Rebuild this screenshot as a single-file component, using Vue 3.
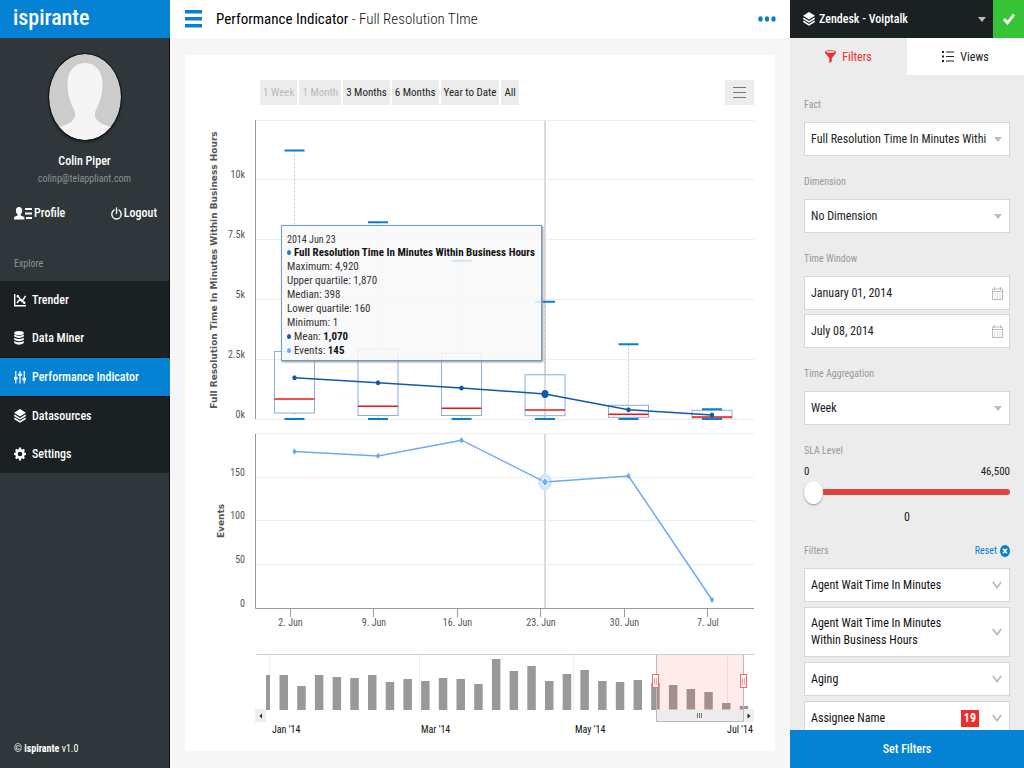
<template>
  <div class="app">
    <aside class="sidebar">
      <h1 class="logo">ispirante</h1>

      <div class="profile">
        <svg class="avatar" viewBox="0 0 72 86">
          <clipPath id="avatar-clip"><ellipse cx="36" cy="43" rx="36" ry="43" /></clipPath>
          <g clip-path="url(#avatar-clip)">
            <rect width="72" height="86" fill="#cccccc" />
            <path fill="#f5f5f5" d="M36 9C25 9 18.500 18 18.500 29.500C18.500 42 22 50 25.500 57C28.500 66 20 70 11 73V86H62V73C52 70 43.500 66 46.500 57C50 50 53.500 42 53.500 29.500C53.500 18 47 9 36 9Z" />
          </g>
        </svg>
        <strong class="user-name">Colin Piper</strong>
        <span class="user-email">colinp@telappliant.com</span>
      </div>

      <div class="user-links">
        <a href="#profile">
          <svg width="18" height="13" viewBox="0 0 18 13" fill="#fff">
            <path d="M5 0C7 0 8.200 1.400 8.200 3.500C8.200 5.200 7.500 6.500 6.700 7.200V8.400L9.700 9.800C10.200 10.100 10.400 10.500 10.400 11V12.500H0V11C0 10.500 .2 10.100 .7 9.800L3.500 8.400V7.200C2.600 6.500 1.900 5.200 1.900 3.500C1.900 1.400 3 0 5 0Z" />
            <path d="M11 1H18V3H11ZM11 5.500H18V7.500H11ZM12 10H18V12H12Z" />
          </svg>
          Profile
        </a>
        <a href="#logout">
          <svg width="11" height="13" viewBox="0 0 11 13" fill="none" stroke="#fff" stroke-width="1.400" stroke-linecap="round">
            <path d="M3 3C1.500 4 .8 5.400 .8 7C.8 9.900 2.900 12 5.500 12S10.200 9.900 10.200 7C10.200 5.400 9.500 4 8 3M5.500 1V6.500" />
          </svg>
          Logout
        </a>
      </div>

      <h2 class="nav-title">Explore</h2>
      <nav class="nav">
        <a v-for="item in navItems" :key="item.label" :href="'#' + item.icon" :class="{ active: item.active }">
          <svg width="12" height="14" viewBox="0 0 12 14">
            <g v-if="item.icon === 'trender'" fill="none" stroke="#fff" stroke-width="1.400">
              <path d="M.7 1V12.800H12M3 10L6 6L8 8.500L11.500 3M3.500 3L10.500 10" />
              <path d="M3 2.500H4.500V4H3ZM9.500 9H11V10.500H9.500Z" stroke-width="1" />
            </g>
            <g v-else-if="item.icon === 'miner'" fill="#fff">
              <ellipse cx="5" cy="2" rx="4.800" ry="2" />
              <path d="M.2 3.500Q5 6 9.800 3.500V5.500Q5 8.300 .2 5.500ZM.2 6.800Q5 9.300 9.800 6.800V8.800Q5 11.600 .2 8.800ZM.2 10Q5 12.500 9.800 10V12Q5 15.500 .2 12Z" />
            </g>
            <g v-else-if="item.icon === 'performance'" fill="#fff">
              <path d="M1.200 1H2.400V7H3.600V9.500H2.400V13.500H1.200V9.500H0V7H1.200ZM5.400 1H6.600V3.500H7.800V6H6.600V13.500H5.400V6H4.200V3.500H5.400ZM9.600 1H10.800V8H12V10.500H10.800V13.500H9.600V10.500H8.400V8H9.600Z" />
            </g>
            <g v-else-if="item.icon === 'datasources'">
              <path fill="#fff" d="M6 0L12 3.800L6 7.600L0 3.800Z" />
              <path fill="none" stroke="#fff" stroke-width="1.500" d="M.3 6.200L6 9.800L11.700 6.200M.3 9.200L6 12.800L11.700 9.200" />
            </g>
            <g v-else>
              <circle cx="6" cy="7" r="3.600" fill="none" stroke="#fff" stroke-width="2.600" />
              <path stroke="#fff" stroke-width="2.200" d="M6 .6V3M6 11V13.400M0 7H2M10 7H12M1.800 2.400L3.300 4M8.700 10L10.200 11.600M10.200 2.400L8.700 4M3.300 10L1.800 11.600" />
            </g>
          </svg>
          {{ item.label }}
        </a>
      </nav>

      <footer class="version">© <b>ispirante</b> v1.0</footer>
    </aside>

    <main class="main">
      <header class="topbar">
        <button class="icon-button" aria-label="Menu">
          <svg width="17" height="18" viewBox="0 0 17 18" fill="#0a7fd0">
            <path d="M0 0H17V3.500H0ZM0 7H17V10.500H0ZM0 14H17V17.500H0Z" />
          </svg>
        </button>
        <h2><b>Performance Indicator</b> - Full Resolution TIme</h2>
        <button class="icon-button more" aria-label="More">
          <svg width="18" height="6" viewBox="0 0 18 6" fill="#0a7fd0">
            <ellipse cx="2.500" cy="3" rx="2.200" ry="2.700" />
            <ellipse cx="9" cy="3" rx="2.200" ry="2.700" />
            <ellipse cx="15.500" cy="3" rx="2.200" ry="2.700" />
          </svg>
        </button>
      </header>

      <section class="card">
        <div class="toolbar">
          <button v-for="r in ranges" :key="r.label" :disabled="r.disabled">{{ r.label }}</button>
          <button class="export" aria-label="Chart menu">
            <svg width="13" height="13" viewBox="0 0 13 13" stroke="#777" stroke-width="1"><path d="M0 1.500H13M0 6.500H13M0 11.500H13" /></svg>
          </button>
        </div>

        <div class="chart">
          <svg :viewBox="`0 0 ${chartW} ${chartH}`">
            <!-- grid and axes -->
            <g stroke="#eeeeee">
              <path v-for="v in [2500, 5000, 7500, 10000, 12500, 0]" :key="v" :d="`M70 ${Math.round(yTime(v)) - 0.5}H569`" />
              <path v-for="v in [50, 100, 150, 200]" :key="v" :d="`M70 ${Math.round(yEvents(v)) - 0.5}H569`" />
            </g>
            <path d="M360 15.500V314M360 329V503" stroke="#dcdcdc" stroke-width="2" />
            <path d="M70.500 15V314M70.500 329V503.500H569" fill="none" stroke="#999" />
            <g class="tick-label" text-anchor="end">
              <text v-for="t in timeTicks" :key="t.label" x="60" :y="yTime(t.value) - 2">{{ t.label }}</text>
              <text v-for="v in [0, 50, 100, 150]" :key="v" x="60" :y="yEvents(v) - 2">{{ v }}</text>
            </g>
            <g class="tick-label" text-anchor="middle">
              <template v-for="(w, i) in weeks" :key="w.label">
                <path :d="`M${Math.round(xWeek(i)) - 4.5} 504V512`" stroke="#999" />
                <text :x="xWeek(i) - 4" y="521">{{ w.label }}</text>
              </template>
            </g>
            <text class="axis-title" text-anchor="middle" transform="translate(32 165) rotate(-90)">Full Resolution Time In Minutes Within Business Hours</text>
            <text class="axis-title" text-anchor="middle" transform="translate(39 416) rotate(-90)">Events</text>

            <!-- box plot -->
            <g v-for="(w, i) in weeks" :key="w.label" fill="none">
              <path :d="`M${xWeek(i)} ${yTime(w.max)}V${yTime(w.q3)}M${xWeek(i)} ${yTime(w.q1)}V${yTime(1)}`" stroke="#a9ccf0" stroke-dasharray="2 2" />
              <rect :x="xWeek(i) - 20" :y="yTime(w.q3)" width="40" :height="yTime(w.q1) - yTime(w.q3)" stroke="#86b1e2" />
              <path :d="`M${xWeek(i) - 20} ${yTime(w.median)}h40`" stroke="#f01414" stroke-width="1.500" />
              <path :d="`M${xWeek(i) - 10} ${yTime(w.max)}h20M${xWeek(i) - 10} ${yTime(20)}h20`" stroke="#0a7fd0" stroke-width="2" />
            </g>
            <polyline :points="meanLine" fill="none" stroke="#0d5ba6" stroke-width="1.500" />
            <ellipse v-for="(w, i) in weeks" :key="w.label" :cx="xWeek(i)" :cy="yTime(w.mean)" :rx="i === selected ? 3.500 : 2.200" :ry="i === selected ? 4 : 2.500" fill="#0d5ba6" />

            <!-- events -->
            <ellipse :cx="xWeek(selected)" :cy="yEvents(weeks[selected].events)" rx="7" ry="8.500" fill="#d3e5f8" />
            <polyline :points="eventLine" fill="none" stroke="#6aacf0" stroke-width="1.500" />
            <path v-for="(w, i) in weeks" :key="w.label" :d="diamond(xWeek(i), yEvents(w.events), i === selected ? 3.500 : 2.200)" fill="#6aacf0" :stroke="i === selected ? '#fff' : 'none'" />

            <!-- navigator -->
            <path d="M84.500 550V605M234.500 550V605M388.500 550V605M542.500 550V605" stroke="#eee" />
            <path d="M71 549.500H569" stroke="#ccc" />
            <rect x="81" y="570" width="4" height="35" fill="#999" />
            <rect v-for="(h, i) in history" :key="i" :x="94.500 + i * 17.700" :y="605 - h" width="8.500" :height="h" fill="#999" />
            <rect x="471" y="550" width="87.500" height="55" fill="#ff4030" opacity="0.100" />
            <rect x="471.500" y="604.500" width="87" height="12" fill="#ececec" />
            <path d="M471.500 550V616.500H558.500V550" fill="none" stroke="#bbb" />
            <path d="M512.500 608V613M514.500 608V613M516.500 608V613" stroke="#777" />
            <g v-for="x in [470.500, 558.500]" :key="x" fill="#fff" stroke="#f26b67">
              <rect :x="x - 3" y="569.500" width="6" height="13" />
              <path :d="`M${x - 1} 573V580M${x + 1} 573V580`" stroke="#f5a5a2" />
            </g>
            <rect x="70" y="604" width="11" height="13" fill="#eee" />
            <rect x="559" y="604" width="10" height="13" fill="#eee" />
            <path d="M77 608.500V613.500L74.500 611ZM562.500 608.500V613.500L565.500 611Z" fill="#222" />
            <g class="nav-label">
              <text x="87" y="628">Jan '14</text>
              <text x="236" y="628">Mar '14</text>
              <text x="390" y="628">May '14</text>
              <text x="568" y="628" text-anchor="end">Jul '14</text>
            </g>
          </svg>

          <div class="tooltip" :style="{ left: (96 / chartW) * 100 + '%', top: (120 / chartH) * 100 + '%' }">
            <small>2014 Jun 23</small>
            <p><i style="background: #0a7fd0"></i><b>Full Resolution Time In Minutes Within Business Hours</b></p>
            <p v-for="row in tooltipRows" :key="row.label">{{ row.label }}: {{ row.value }}</p>
            <p><i style="background: #0d5ba6"></i>Mean: <b>1,070</b></p>
            <p><i style="background: #6aacf0"></i>Events: <b>145</b></p>
          </div>
        </div>
      </section>
    </main>

    <aside class="panel">
      <div class="source">
        <label class="source-select">
          <svg width="12" height="14" viewBox="0 0 12 14">
            <path fill="#fff" d="M6 0L12 3.800L6 7.600L0 3.800Z" />
            <path fill="none" stroke="#fff" stroke-width="1.500" d="M.3 6.200L6 9.800L11.700 6.200M.3 9.200L6 12.800L11.700 9.200" />
          </svg>
          <select aria-label="Datasource"><option>Zendesk - Voiptalk</option></select>
          <span class="caret"></span>
        </label>
        <button class="apply" aria-label="Apply">
          <svg width="12" height="12" viewBox="0 0 12 12" fill="none" stroke="#fff" stroke-width="2.800"><path d="M1 6L4.500 9.800L11 1.500" /></svg>
        </button>
      </div>

      <div class="tabs">
        <button class="active">
          <svg width="11" height="13" viewBox="0 0 11 13" fill="#ee2e2a">
            <path d="M0 1.800C0 -.3 11 -.3 11 1.800V3L6.800 8V11.500L4.300 13V8L0 3Z" />
            <ellipse cx="5.500" cy="1.900" rx="4.300" ry=".8" fill="#ececec" />
          </svg>
          Filters
        </button>
        <button>
          <svg width="12" height="11" viewBox="0 0 12 11" fill="#222">
            <path d="M0 0H2V2H0ZM4 .4H12V1.600H4ZM0 4.500H2V6.500H0ZM4 4.900H12V6.100H4ZM0 9H2V11H0ZM4 9.400H12V10.600H4Z" />
          </svg>
          Views
        </button>
      </div>

      <form class="fields" @submit.prevent>
        <label class="title" for="fact">Fact</label>
        <div class="box">
          <select id="fact"><option>Full Resolution Time In Minutes Withi</option></select>
          <span class="caret"></span>
        </div>

        <label class="title" for="dimension">Dimension</label>
        <div class="box">
          <select id="dimension"><option>No Dimension</option></select>
          <span class="caret"></span>
        </div>

        <label class="title" for="from">Time Window</label>
        <div v-for="d in dates" :key="d.id" class="box">
          <input :id="d.id" v-model="d.value" type="text" :aria-label="d.id" />
          <svg class="calendar" width="11" height="13" viewBox="0 0 11 13" fill="none" stroke="#bbb">
            <path d="M.5 2H10.500V12.500H.5ZM.5 4.500H10.500M2.500 0V3M8.500 0V3" />
            <path d="M2.500 7H9M2.500 9H9M2.500 11H9" stroke-dasharray="1 1.500" />
          </svg>
        </div>

        <label class="title" for="aggregation">Time Aggregation</label>
        <div class="box">
          <select id="aggregation"><option>Week</option></select>
          <span class="caret"></span>
        </div>

        <label class="title" for="sla">SLA Level</label>
        <div class="limits"><span>0</span><span>46,500</span></div>
        <input id="sla" v-model="sla" class="slider" type="range" min="0" max="46500" />
        <output class="sla-value">{{ sla }}</output>

        <div class="filters-head">
          <span>Filters</span>
          <a href="#reset">
            Reset
            <svg width="10" height="12" viewBox="0 0 10 12">
              <ellipse cx="5" cy="6" rx="5" ry="6" fill="#0a7fd0" />
              <path d="M3 3.800L7 8.200M7 3.800L3 8.200" stroke="#fff" stroke-width="1.600" />
            </svg>
          </a>
        </div>
        <button v-for="f in filters" :key="f.label" class="filter">
          <span class="filter-label">{{ f.label }}</span>
          <span v-if="f.count" class="badge">{{ f.count }}</span>
          <svg width="10" height="8" viewBox="0 0 10 8" fill="none" stroke="#bbb" stroke-width="1.800"><path d="M.8 1L5 6.500L9.200 1" /></svg>
        </button>
      </form>

      <button class="submit">Set Filters</button>
    </aside>
  </div>
</template>

<script setup>
import { ref, computed } from 'vue'

const navItems = [
  { label: 'Trender', icon: 'trender' },
  { label: 'Data Miner', icon: 'miner' },
  { label: 'Performance Indicator', icon: 'performance', active: true },
  { label: 'Datasources', icon: 'datasources' },
  { label: 'Settings', icon: 'settings' }
]

const ranges = [
  { label: '1 Week', disabled: true },
  { label: '1 Month', disabled: true },
  { label: '3 Months' },
  { label: '6 Months' },
  { label: 'Year to Date' },
  { label: 'All' }
]

const chartW = 590
const chartH = 646
const selected = 3

const weeks = [
  { label: '2. Jun', max: 11245, q3: 2843, median: 857, q1: 272, mean: 1748, events: 180 },
  { label: '9. Jun', max: 8244, q3: 2947, median: 552, q1: 167, mean: 1538, events: 175 },
  { label: '16. Jun', max: 6639, q3: 2767, median: 468, q1: 167, mean: 1317, events: 193 },
  { label: '23. Jun', max: 4920, q3: 1870, median: 398, q1: 160, mean: 1070, events: 145 },
  { label: '30. Jun', max: 3144, q3: 594, median: 217, q1: 92, mean: 410, events: 152 },
  { label: '7. Jul', max: 426, q3: 385, median: 105, q1: 63, mean: 188, events: 10 }
]

const timeTicks = [
  { value: 0, label: '0k' },
  { value: 2500, label: '2.5k' },
  { value: 5000, label: '5k' },
  { value: 7500, label: '7.5k' },
  { value: 10000, label: '10k' }
]

// bar heights of the navigator, one per week
const history = [35, 24, 35, 33, 32, 35, 28, 31, 29, 32, 31, 26, 51, 39, 44, 29, 36, 40, 29, 28, 30, 27, 25, 21, 18, 7, 4]

const tooltipRows = [
  { label: 'Maximum', value: '4,920' },
  { label: 'Upper quartile', value: '1,870' },
  { label: 'Median', value: '398' },
  { label: 'Lower quartile', value: '160' },
  { label: 'Minimum', value: '1' }
]

const xWeek = (i) => 109.5 + i * 83.5
const yTime = (v) => 314.5 - (v / 12500) * 299
const yEvents = (v) => 503.5 - (v / 200) * 174.4
const diamond = (x, y, r) => `M${x - r} ${y}L${x} ${y - r - 1}L${x + r} ${y}L${x} ${y + r + 1}Z`

const meanLine = computed(() => weeks.map((w, i) => `${xWeek(i)},${yTime(w.mean)}`).join(' '))
const eventLine = computed(() => weeks.map((w, i) => `${xWeek(i)},${yEvents(w.events)}`).join(' '))

const dates = ref([
  { id: 'from', value: 'January 01, 2014' },
  { id: 'to', value: 'July 08, 2014' }
])
const sla = ref(0)

const filters = [
  { label: 'Agent Wait Time In Minutes' },
  { label: 'Agent Wait Time In Minutes Within Business Hours' },
  { label: 'Aging' },
  { label: 'Assignee Name', count: 19 }
]
</script>

<style>
body {
  margin: 0;
  background: #f6f6f6;
}
</style>

<style scoped>
* {
  box-sizing: border-box;
}

.app {
  display: grid;
  grid-template-columns: 170px 1fr 234px;
  min-height: 100vh;
  font-family: "Roboto Condensed", "Liberation Sans", sans-serif;
  font-size: 12px;
  color: #222;
}

a {
  text-decoration: none;
}

button,
input,
select {
  font: inherit;
  color: inherit;
  border: 0;
  border-radius: 0;
  padding: 0;
  margin: 0;
  background: none;
}

svg {
  flex: none;
}

/* sidebar */
.sidebar {
  display: flex;
  flex-direction: column;
  background: #2f373a;
  border-right: 1px solid #0d1011;
  color: #fff;
}

.logo {
  height: 38px;
  margin: 0 -1px 0 0;
  padding-left: 13px;
  background: #0582d3;
  font-size: 22px;
  font-weight: 500;
  line-height: 36px;
}

.profile {
  display: flex;
  flex-direction: column;
  align-items: center;
  padding-top: 16px;
}

.avatar {
  width: 72px;
  height: 86px;
  margin-bottom: 13px;
  border-radius: 50%;
  box-shadow: 0 0 0 1px #14181a, 0 2px 3px #14181a;
}

.user-name {
  font-weight: 500;
  line-height: 17px;
}

.user-email {
  color: #8d9294;
  font-size: 10px;
  line-height: 17px;
}

.user-links {
  display: flex;
  justify-content: space-between;
  margin-top: 18px;
  padding: 0 12px 0 14px;
}

.user-links a {
  display: flex;
  align-items: center;
  gap: 2px;
  color: #fff;
  font-weight: 500;
  line-height: 16px;
}

.nav-title {
  margin: 35px 0 9px;
  padding-left: 14px;
  color: #8d9294;
  font-size: 10px;
  font-weight: 400;
  line-height: 16px;
}

.nav {
  background: #1b2022;
}

.nav a {
  display: flex;
  align-items: center;
  gap: 6px;
  height: 38px;
  padding-left: 14px;
  color: #fff;
  font-weight: 500;
}

.nav a.active {
  height: 40px;
  margin-right: -1px;
  border-top: 1px solid #0d1011;
  border-bottom: 1px solid #0d1011;
  background: #0582d3;
}

.version {
  margin-top: auto;
  padding: 0 14px 11px;
  font-size: 10px;
  line-height: 16px;
}

/* main */
.main {
  min-width: 0;
}

.topbar {
  display: flex;
  align-items: center;
  gap: 14px;
  height: 38px;
  padding: 0 14px 0 15px;
  background: #fff;
}

.topbar h2 {
  margin: 0;
  font-size: 15px;
  font-weight: 300;
  color: #111;
}

.topbar b {
  font-weight: 400;
  color: #000;
}

.icon-button {
  display: flex;
}

.more {
  margin-left: auto;
}

.card {
  margin: 17px 15px;
  padding-top: 25px;
  background: #fff;
}

.toolbar {
  display: flex;
  gap: 2px;
  padding: 0 21px 0 75px;
}

.toolbar button {
  height: 25px;
  padding: 0 3px;
  background: #ececec;
  font-size: 11px;
}

.toolbar button:disabled {
  color: #bbb;
}

.toolbar .export {
  display: flex;
  align-items: center;
  justify-content: center;
  width: 29px;
  margin-left: auto;
}

.chart {
  position: relative;
}

.chart > svg {
  display: block;
  width: 100%;
}

.tick-label {
  font-size: 10px;
  fill: #555;
}

.nav-label {
  font-size: 10px;
  fill: #111;
}

.axis-title {
  font-family: "DejaVu Sans", sans-serif;
  font-size: 9px;
  font-weight: 700;
  fill: #555;
}

.tooltip {
  position: absolute;
  padding: 7px 6px 2px 5px;
  border: 1px solid #6f9bcf;
  background: rgba(248, 248, 248, 0.85);
  box-shadow: 1px 1px 2px #888;
  font-size: 11px;
  line-height: 14px;
  color: #333;
  white-space: nowrap;
}

.tooltip small {
  display: block;
  font-size: 10px;
  line-height: 13px;
}

.tooltip p {
  margin: 0;
}

.tooltip b {
  color: #111;
}

.tooltip i {
  display: inline-block;
  width: 4px;
  height: 5px;
  margin-right: 3px;
  border-radius: 50%;
  vertical-align: 1px;
}

/* filter panel */
.panel {
  display: flex;
  flex-direction: column;
  height: 100vh;
  background: #ececec;
}

.source {
  display: flex;
  flex: none;
  height: 38px;
  background: #1b2022;
}

.source-select {
  display: flex;
  flex: 1;
  align-items: center;
  gap: 4px;
  padding: 0 7px 0 13px;
  color: #fff;
}

.source select {
  font-weight: 500;
}

select {
  flex: 1;
  min-width: 0;
  appearance: none;
}

.caret {
  border: 4px solid transparent;
  border-top: 5px solid #bbb;
  border-bottom: 0;
}

.apply {
  display: flex;
  align-items: center;
  justify-content: center;
  width: 31px;
  background: #35c435;
}

.tabs {
  display: flex;
  flex: none;
  height: 37px;
}

.tabs button {
  display: flex;
  flex: 1;
  align-items: center;
  justify-content: center;
  gap: 6px;
  background: #fff;
}

.tabs .active {
  background: none;
  color: #ee2e2a;
}

.fields {
  display: flex;
  flex: 1;
  flex-direction: column;
  min-height: 0;
  padding: 4px 14px 0;
  overflow-y: auto;
  scrollbar-width: none;
}

.title {
  flex: none;
  margin: 18px 0 9px;
  color: #999;
  font-size: 10px;
  line-height: 16px;
}

.box {
  display: flex;
  flex: none;
  align-items: center;
  height: 34px;
  padding: 0 7px 0 6px;
  border: 1px solid #d6d6d6;
  background: #fff;
}

.box + .box {
  margin-top: 4px;
}

.box input {
  flex: 1;
  min-width: 0;
}

.calendar {
  margin-right: -1px;
}

.limits {
  display: flex;
  flex: none;
  justify-content: space-between;
  margin-top: -4px;
  font-size: 11px;
  line-height: 16px;
}

.slider {
  flex: none;
  width: 100%;
  height: 24px;
  appearance: none;
}

.slider::-webkit-slider-runnable-track {
  height: 6px;
  border-radius: 3px;
  background: #e0433e;
}

.slider::-webkit-slider-thumb {
  width: 19px;
  height: 23px;
  margin-top: -8px;
  border-radius: 50%;
  background: #fff;
  box-shadow: 0 1px 2px #999;
  appearance: none;
}

.sla-value {
  flex: none;
  margin-top: 5px;
  line-height: 16px;
  text-align: center;
}

.filters-head {
  display: flex;
  flex: none;
  justify-content: space-between;
  margin: 18px 0 9px;
  color: #999;
  font-size: 10px;
  line-height: 16px;
}

.filters-head a {
  display: flex;
  align-items: center;
  gap: 3px;
  color: #0a7fd0;
}

.filter {
  display: flex;
  flex: none;
  align-items: center;
  min-height: 34px;
  margin-bottom: 5px;
  padding: 7px 7px 7px 6px;
  border: 1px solid #d6d6d6;
  background: #fff;
  color: #111;
  line-height: 17px;
  text-align: left;
}

.filter-label {
  flex: 1;
  padding-right: 20px;
}

.badge {
  margin-right: 13px;
  padding: 0 3px;
  background: #ee2e2a;
  color: #fff;
  font-weight: 700;
}

.submit {
  flex: none;
  height: 38px;
  background: #0582d3;
  color: #fff;
  font-weight: 500;
}
</style>
